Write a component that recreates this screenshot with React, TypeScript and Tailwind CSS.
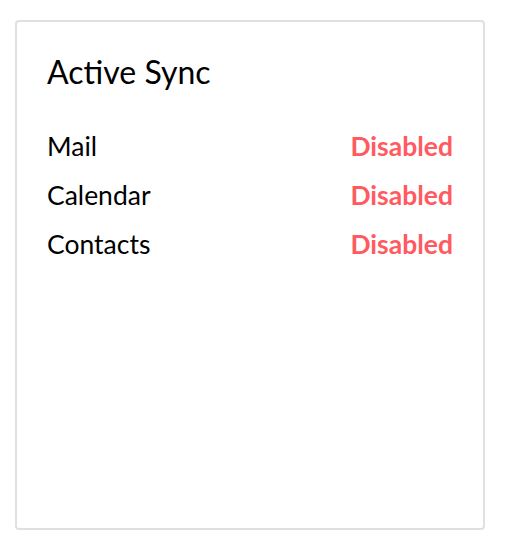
export default function App() {
  const rows = ["Mail", "Calendar", "Contacts"];
  return (
    <div className="pt-5 pl-[15px] font-['Lato',sans-serif] text-black">
      <div className="w-[470px] h-[510px] border-2 border-[#e0e0e0] rounded-[4px] bg-white px-[30px] pt-[30px]">
        <h2 className="text-[32px] leading-[40px]">Active Sync</h2>
        <div className="mt-[30px] flex flex-col">
          {rows.map((r) => (
            <div key={r} className="flex justify-between items-center h-[49px] text-[26.5px]">
              <span>{r}</span>
              <span className="font-bold text-[#ff5a5f]">Disabled</span>
            </div>
          ))}
        </div>
      </div>
    </div>
  );
}
